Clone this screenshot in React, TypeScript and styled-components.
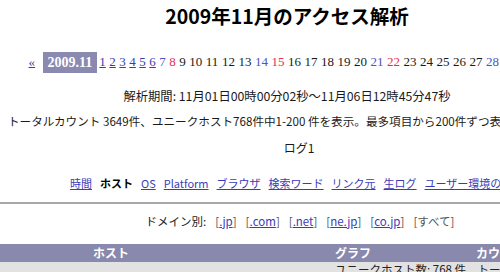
import React from 'react';
import styled, { createGlobalStyle } from 'styled-components';

const GlobalStyle = createGlobalStyle`
  body {
    margin: 0;
    background: #ffffff;
    color: #111111;
    font-family: "Noto Sans CJK JP", "Liberation Sans", sans-serif;
    overflow: hidden;
  }
`;

const Page = styled.div`
  width: 600px;
`;

const Head = styled.div`
  width: 558px;
  margin-left: 8px;
  text-align: center;
`;

const Title = styled.h1`
  margin: 0;
  padding-top: 3px;
  font-size: 19.5px;
  line-height: 26px;
  font-weight: bold;
  color: #000000;
  white-space: nowrap;
`;

const DateNav = styled.div`
  margin-top: 22px;
  height: 22px;
  display: flex;
  justify-content: center;
  align-items: center;
  white-space: nowrap;
  font-family: "Liberation Serif", "DejaVu Serif", serif;
  font-size: 13px;
`;

const Day = styled.a<{ $tone?: 'link' | 'sat' | 'sun' | 'plain' }>`
  margin-right: 3.5px;
  text-decoration: ${p => (p.$tone === 'link' ? 'underline' : 'none')};
  color: ${p =>
    p.$tone === 'link' ? '#3b3bb0' : p.$tone === 'sat' ? '#5252c4' : p.$tone === 'sun' ? '#e0305a' : '#1a1a1a'};
`;

const CurrentMonth = styled.span`
  display: inline-block;
  background: #8a89b0;
  color: #ffffff;
  font-weight: bold;
  font-size: 14px;
  line-height: 21px;
  padding: 0 5px;
  margin: 0 2px 0 4px;
`;

const Line = styled.div<{ $top: number; $size?: number; $shift?: number }>`
  margin-top: ${p => p.$top}px;
  padding-left: ${p => p.$shift || 0}px;
  font-size: ${p => p.$size || 12}px;
  line-height: 16px;
  white-space: nowrap;
  color: #1a1a1a;
`;

const Tabs = styled.div`
  margin-top: 19px;
  padding-left: 62px;
  display: flex;
  justify-content: flex-start;
  gap: 8px;
  font-size: 11px;
  line-height: 16px;
  white-space: nowrap;
`;

const Tab = styled.a<{ $active?: boolean }>`
  color: ${p => (p.$active ? '#000000' : '#3b3bb8')};
  font-weight: ${p => (p.$active ? 'bold' : 'normal')};
  text-decoration: ${p => (p.$active ? 'none' : 'underline')};
`;

const Rule = styled.hr`
  margin: 11px 0 0;
  border: 0;
  border-top: 2px solid #a8a8a8;
`;

const DomainBar = styled.div`
  width: 600px;
  margin-top: 9px;
  text-align: center;
  font-size: 11.5px;
  line-height: 16px;
  color: #222222;
  white-space: nowrap;
`;

const Bracket = styled.span`
  margin-left: 9px;
  color: #555555;
`;

const DomainLink = styled.a`
  color: #3b3bb8;
  text-decoration: underline;
`;

const Table = styled.div`
  margin-top: 15px;
  width: 600px;
`;

const HeadRow = styled.div`
  display: grid;
  grid-template-columns: 222px 262px 116px;
  background: #8988ad;
  height: 18px;
  align-items: center;
`;

const HeadCell = styled.div<{ $align?: 'center' | 'left' }>`
  text-align: ${p => p.$align || 'center'};
  margin-left: ${p => (p.$align === 'left' ? '-8px' : '0')};
  color: #ffffff;
  font-weight: bold;
  font-size: 12px;
  line-height: 18px;
`;

const SummaryRow = styled.div`
  background: #e2e2e2;
  height: 20px;
  padding-left: 335px;
  font-size: 11.5px;
  line-height: 15px;
  color: #222222;
  white-space: nowrap;
`;

type Tone = 'link' | 'sat' | 'sun' | 'plain';

const days: { n: number; tone: Tone }[] = Array.from({ length: 30 }, (_, i) => {
  const n = i + 1;
  let tone: Tone = 'plain';
  if (n <= 6) tone = 'link';
  else if (n % 7 === 0) tone = 'sat';
  else if (n % 7 === 1) tone = 'sun';
  return { n, tone };
});

const tabs = ['時間', 'ホスト', 'OS', 'Platform', 'ブラウザ', '検索ワード', 'リンク元', '生ログ', 'ユーザー環境の詳細'];
const domains = ['.jp', '.com', '.net', 'ne.jp', 'co.jp'];

const App: React.FC = () => {
  return (
    <Page>
      <GlobalStyle />
      <Head>
        <Title>2009年11月のアクセス解析</Title>

        <DateNav>
          <Day $tone="link">«</Day>
          <CurrentMonth>2009.11</CurrentMonth>
          {days.map(d => (
            <Day key={d.n} $tone={d.tone}>
              {d.n}
            </Day>
          ))}
          <Day $tone="plain">»</Day>
        </DateNav>

        <Line $top={15} $size={12.3}>
          解析期間: 11月01日00時00分02秒～11月06日12時45分47秒
        </Line>
        <Line $top={9} $size={11.6}>
          トータルカウント 3649件、ユニークホスト768件中1-200 件を表示。最多項目から200件ずつ表示しています。
        </Line>
        <Line $top={11} $shift={24}>
          ログ1
        </Line>

        <Tabs>
          {tabs.map(t => (
            <Tab key={t} $active={t === 'ホスト'}>
              {t}
            </Tab>
          ))}
        </Tabs>
      </Head>

      <Rule />

      <DomainBar>
        ドメイン別:
        {domains.map(d => (
          <Bracket key={d}>
            [<DomainLink>{d}</DomainLink>]
          </Bracket>
        ))}
        <Bracket>[すべて]</Bracket>
      </DomainBar>

      <Table>
        <HeadRow>
          <HeadCell>ホスト</HeadCell>
          <HeadCell>グラフ</HeadCell>
          <HeadCell $align="left">カウント</HeadCell>
        </HeadRow>
        <SummaryRow>ユニークホスト数: 768 件　トータルカウント: 3649 件</SummaryRow>
      </Table>
    </Page>
  );
};

export default App;
